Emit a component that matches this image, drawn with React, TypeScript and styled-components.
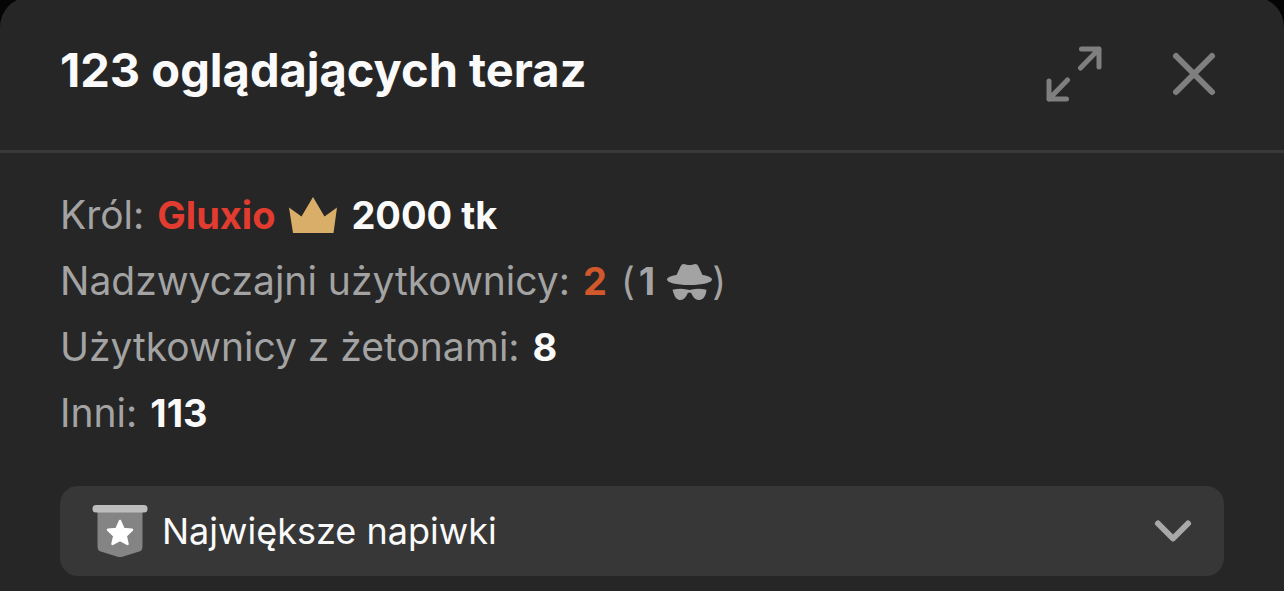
import React from "react";
import styled, { createGlobalStyle } from "styled-components";

const GlobalStyle = createGlobalStyle`
  *, *::before, *::after { box-sizing: border-box; }
  html { background: #050505; }
  body {
    margin: 0;
    font-family: Inter, "Liberation Sans", sans-serif;
    background: #050505;
    overflow-x: hidden;
  }
`;

const Sheet = styled.main`
  min-height: calc(100vh + 3px);
  margin-top: -3px;
  border-radius: 30px 30px 0 0;
  background: #262626;
`;

const Header = styled.header`
  display: flex;
  align-items: center;
  justify-content: space-between;
  height: 156px;
  padding: 0 60px;
  border-bottom: 3px solid #393939;
`;

const Title = styled.h1`
  margin: 0 0 8px;
  font-size: 47px;
  line-height: 60px;
  font-weight: 700;
  color: #fafafa;
`;

const Actions = styled.div`
  display: flex;
  align-items: center;
  gap: 62px;
`;

const IconButton = styled.button`
  display: flex;
  padding: 0;
  border: 0;
  background: none;
  color: #7f7f7f;
  cursor: pointer;
`;

const Content = styled.div`
  display: flex;
  flex-direction: column;
  gap: 40px;
  padding: 29px 60px 12px;
`;

const Stats = styled.dl`
  margin: 0;
`;

const Row = styled.div`
  display: flex;
  align-items: center;
  gap: 13px;
  height: 66px;
  font-size: 39px;
  line-height: 48px;
`;

const Label = styled.dt`
  color: #a3a3a3;
`;

const Value = styled.dd<{ $tone?: string }>`
  display: flex;
  align-items: center;
  gap: 14px;
  margin: 0;
  font-size: 38px;
  font-weight: 700;
  color: ${({ $tone }) => $tone ?? "#fafafa"};
`;

const UserLink = styled.a`
  color: #e23b30;
  text-decoration: none;
`;

const Hidden = styled.span`
  display: flex;
  align-items: center;
  font-weight: 400;
  color: #a3a3a3;

  b {
    margin: 0 12px 0 4px;
    font-weight: 700;
  }
`;

const Tips = styled.button`
  display: flex;
  align-items: center;
  gap: 14px;
  width: 100%;
  height: 90px;
  padding: 0 32px;
  border: 0;
  border-radius: 18px;
  background: #373737;
  color: #fafafa;
  font-family: inherit;
  font-size: 36px;
  line-height: 44px;
  text-align: left;
  cursor: pointer;
`;

const TipsLabel = styled.span`
  flex: 1;
`;

const ExpandIcon = () => (
  <svg width="56" height="56" viewBox="0 0 56 56" fill="none" stroke="currentColor" strokeWidth="5" strokeLinecap="round" strokeLinejoin="round" aria-hidden="true">
    <path d="M35.500 3H53v18M53 3 34.500 22" />
    <path d="M3 35v18h17.500M3 53 21.500 34" />
  </svg>
);

const CloseIcon = () => (
  <svg width="60" height="60" viewBox="0 0 60 60" fill="none" stroke="currentColor" strokeWidth="6" strokeLinecap="round" aria-hidden="true">
    <path d="m12 12 36 36M48 12 12 48" />
  </svg>
);

const CrownIcon = () => (
  <svg width="48" height="38" viewBox="0 0 48 38" aria-hidden="true">
    <path d="M0 11.500 12.500 20.500 24 1 35.500 20.500 48 11.500 44.500 37H4Z" fill="#d9ae68" />
  </svg>
);

const IncognitoIcon = () => (
  <svg width="45" height="37" viewBox="0 0 45 37" fill="#a3a3a3" aria-hidden="true">
    <path d="M9.500 12 13.500 3.500Q15 0 19 1.500q3.500 1 7 0Q30 0 31.500 3.500L35.500 12C41 12.800 45 14.500 45 16.500 45 19.500 36 22 22.500 22S0 19.500 0 16.500C0 14.500 4 12.800 9.500 12Z" />
    <path d="M5.500 26.800Q13 25 20 26.500 22.500 27.300 25 26.500 32 25 39.500 26.800L39 30C37.500 35 35 37 32 37 28 37 26 34 24.500 30.500Q22.500 28.500 20.500 30.500C19 34 17 37 13.500 37 10 37 8 34.500 6.500 30Z" />
  </svg>
);

const BadgeIcon = () => (
  <svg width="56" height="54" viewBox="0 0 56 54" aria-hidden="true">
    <path d="M5.500 6H50.500V43Q50.500 46 48 47.200L30.500 52.700Q28 53.500 25.500 52.700L8 47.200Q5.500 46 5.500 43Z" fill="#848484" />
    <rect x="0.500" y="1" width="55" height="7.500" rx="3.500" fill="#bdbdbd" />
    <path d="m28 17 3.500 8 8.500.8-6.300 6L35.500 40 28 36 20.500 40l1.800-8.200-6.300-6 8.500-.8Z" fill="#fff" stroke="#fff" strokeWidth="2.500" strokeLinejoin="round" />
  </svg>
);

const ChevronIcon = () => (
  <svg width="38" height="24" viewBox="0 0 38 24" fill="none" stroke="#a8a8a8" strokeWidth="6" strokeLinecap="round" strokeLinejoin="round" aria-hidden="true">
    <path d="M4 4.500 19 19.500 34 4.500" />
  </svg>
);

export default function App() {
  return (
    <>
      <GlobalStyle />
      <Sheet>
        <Header>
          <Title>123 oglądających teraz</Title>
          <Actions>
            <IconButton type="button" aria-label="Powiększ"><ExpandIcon /></IconButton>
            <IconButton type="button" aria-label="Zamknij"><CloseIcon /></IconButton>
          </Actions>
        </Header>
        <Content>
          <Stats>
            <Row>
              <Label>Król:</Label>
              <Value>
                <UserLink href="#gluxio">Gluxio</UserLink>
                <CrownIcon />
                <span>2000 tk</span>
              </Value>
            </Row>
            <Row>
              <Label>Nadzwyczajni użytkownicy:</Label>
              <Value $tone="#d1582b">
                <span>2</span>
                <Hidden>(<b>1</b><IncognitoIcon />)</Hidden>
              </Value>
            </Row>
            <Row>
              <Label>Użytkownicy z żetonami:</Label>
              <Value>8</Value>
            </Row>
            <Row>
              <Label>Inni:</Label>
              <Value>113</Value>
            </Row>
          </Stats>
          <Tips type="button" aria-expanded="false">
            <BadgeIcon />
            <TipsLabel>Największe napiwki</TipsLabel>
            <ChevronIcon />
          </Tips>
        </Content>
      </Sheet>
    </>
  );
}
